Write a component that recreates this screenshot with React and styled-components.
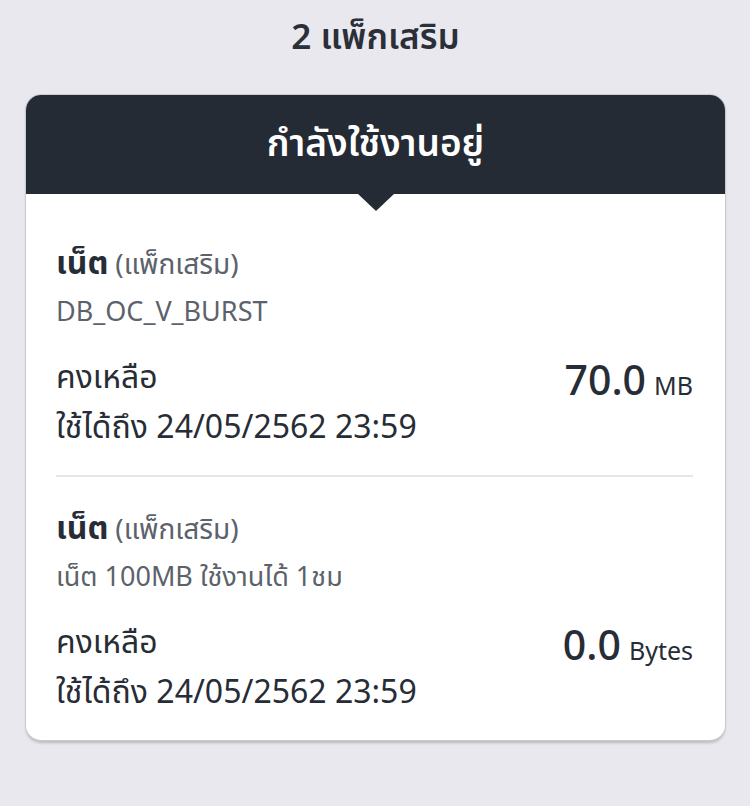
import React from "react";
import styled, { createGlobalStyle } from "styled-components";

const GlobalStyle = createGlobalStyle`
  html, body {
    margin: 0;
    padding: 0;
    background: #e9e8ef;
  }
  body {
    font-family: "Noto Sans", "Noto Sans Thai", "Open Sans", sans-serif;
    color: #272d36;
  }
`;

const Page = styled.div`
  width: 750px;
  height: 806px;
  box-sizing: border-box;
  padding: 12px 25px 0 26px;
  display: flex;
  flex-direction: column;
`;

const PageTitle = styled.h1`
  margin: 0;
  height: 83px;
  text-align: center;
  font-size: 35px;
  font-weight: 600;
  line-height: 48px;
  color: #2a2f38;
`;

const Card = styled.div`
  background: #fff;
  border-radius: 15px;
  box-shadow: 0 0 0 1px #c9cbd1, 0 3px 3px rgba(0, 0, 0, 0.2);
  overflow: hidden;
`;

const CardHeader = styled.div`
  position: relative;
  height: 99px;
  background: #242b35;
  color: #fff;
  display: flex;
  align-items: center;
  justify-content: center;
  font-size: 37px;
  font-weight: 600;

  &::after {
    content: "";
    position: absolute;
    left: 50%;
    bottom: -17px;
    margin-left: -18px;
    border-left: 18px solid transparent;
    border-right: 18px solid transparent;
    border-top: 17px solid #242b35;
  }
`;

const Body = styled.div`
  padding: 18px 32px 0 30px;
`;

const Pack = styled.div`
  padding: ${(p) => (p.last ? "26px 0 24px" : "26px 0 24px")};
  border-bottom: ${(p) => (p.last ? "none" : "2px solid #e6e6ea")};
`;

const PackName = styled.div`
  display: flex;
  align-items: baseline;
  gap: 7px;
  font-size: 32px;
  font-weight: 700;
  line-height: 48px;
`;

const PackTag = styled.span`
  font-size: 28px;
  font-weight: 400;
  color: #5c626b;
`;

const PackCode = styled.div`
  font-size: 27px;
  color: #5c626b;
  line-height: 48px;
  margin-bottom: 16px;
`;

const Row = styled.div`
  display: flex;
  justify-content: space-between;
  align-items: flex-start;
`;

const Label = styled.div`
  font-size: 32px;
  line-height: 50px;
`;

const Amount = styled.div`
  display: flex;
  align-items: baseline;
  gap: 8px;
  margin-top: 3px;
  font-size: 41px;
  line-height: 50px;
  font-weight: 500;
`;

const Unit = styled.span`
  font-size: 25px;
  font-weight: 400;
`;

const packs = [
  { code: "DB_OC_V_BURST", amount: "70.0", unit: "MB" },
  { code: "เน็ต 100MB ใช้งานได้ 1ชม", amount: "0.0", unit: "Bytes" },
];

export default function App() {
  return (
    <>
      <GlobalStyle />
      <Page>
        <PageTitle>2 แพ็กเสริม</PageTitle>
        <Card>
          <CardHeader>กำลังใช้งานอยู่</CardHeader>
          <Body>
            {packs.map((p, i) => (
              <Pack key={i} last={i === packs.length - 1}>
                <PackName>
                  เน็ต <PackTag>(แพ็กเสริม)</PackTag>
                </PackName>
                <PackCode>{p.code}</PackCode>
                <Row>
                  <div>
                    <Label>คงเหลือ</Label>
                    <Label>ใช้ได้ถึง 24/05/2562 23:59</Label>
                  </div>
                  <Amount>
                    {p.amount}
                    <Unit>{p.unit}</Unit>
                  </Amount>
                </Row>
              </Pack>
            ))}
          </Body>
        </Card>
      </Page>
    </>
  );
}
